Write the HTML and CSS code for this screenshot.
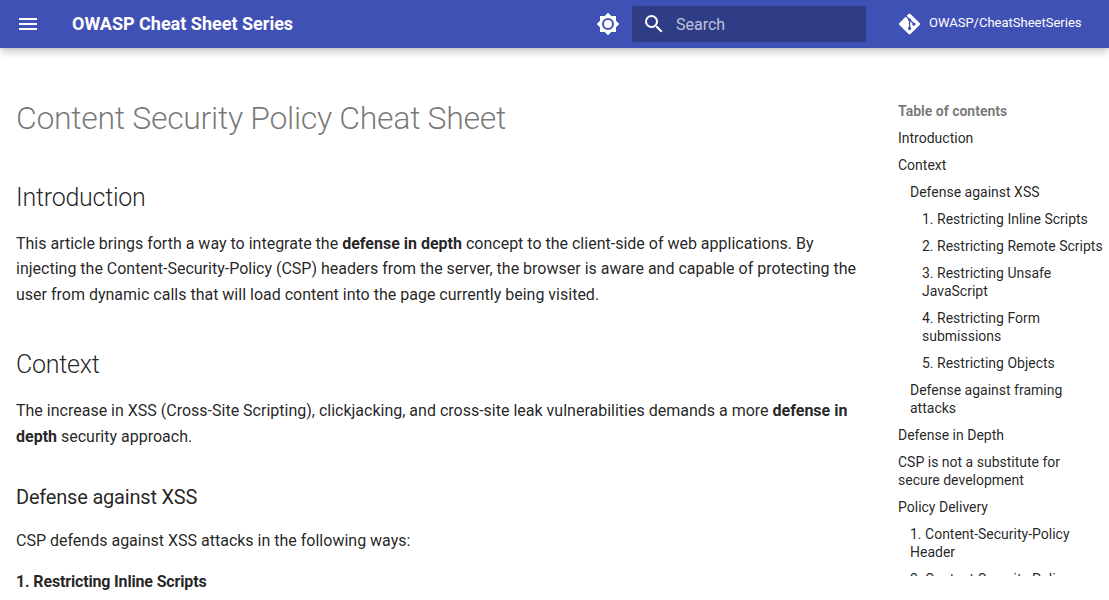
FILE: index.html
```html
<!DOCTYPE html>
<html lang="en">
<head>
<meta charset="utf-8">
<title>Content Security Policy Cheat Sheet</title>
<link rel="stylesheet" href="styles.css">
</head>
<body>
<header class="header">
  <svg class="icon menu" viewBox="0 0 24 24"><path d="M3 6h18v2H3V6m0 5h18v2H3v-2m0 5h18v2H3v-2Z"/></svg>
  <div class="title">OWASP Cheat Sheet Series</div>
  <svg class="icon theme" viewBox="0 0 24 24"><path d="M12 8a4 4 0 0 0-4 4 4 4 0 0 0 4 4 4 4 0 0 0 4-4 4 4 0 0 0-4-4m0 10a6 6 0 0 1-6-6 6 6 0 0 1 6-6 6 6 0 0 1 6 6 6 6 0 0 1-6 6m8-9.31V4h-4.69L12 .69 8.69 4H4v4.69L.69 12 4 15.31V20h4.69L12 23.31 15.31 20H20v-4.69L23.31 12 20 8.69Z"/></svg>
  <div class="search">
    <svg class="icon" viewBox="0 0 24 24"><path d="M9.5 3A6.5 6.5 0 0 1 16 9.5c0 1.61-.59 3.09-1.56 4.23l.27.27h.79l5 5-1.5 1.5-5-5v-.79l-.27-.27A6.516 6.516 0 0 1 9.5 16 6.5 6.5 0 0 1 3 9.5 6.5 6.5 0 0 1 9.5 3m0 2C7 5 5 7 5 9.5S7 14 9.5 14 14 12 14 9.5 12 5 9.5 5Z"/></svg>
    <span class="placeholder">Search</span>
  </div>
  <a class="source">
    <svg class="git" viewBox="0 0 448 512"><path d="M439.55 236.05 244 40.45a28.87 28.87 0 0 0-40.81 0l-40.66 40.63 51.52 51.52c27.06-9.14 52.68 16.77 43.39 43.68l49.66 49.66c34.23-11.8 61.18 31 35.47 56.69-26.49 26.49-70.21-2.87-56-37.34L240.22 199v121.85c25.3 12.54 22.26 41.85 9.08 55a34.34 34.34 0 0 1-48.55 0c-17.57-17.6-11.07-46.91 11.25-56v-123c-20.8-8.51-24.6-30.74-18.64-45L142.57 101 8.45 235.14a28.86 28.86 0 0 0 0 40.81l195.61 195.6a28.86 28.86 0 0 0 40.8 0l194.69-194.69a28.86 28.86 0 0 0 0-40.81z"/></svg>
    <span class="repo">OWASP/CheatSheetSeries</span>
  </a>
</header>
<div class="layout">
  <main class="content">
    <h1>Content Security Policy Cheat Sheet</h1>
    <h2>Introduction</h2>
    <p>This article brings forth a way to integrate the <strong>defense in depth</strong> concept to the client-side of web applications. By<br>injecting the Content-Security-Policy (CSP) headers from the server, the browser is aware and capable of protecting the<br>user from dynamic calls that will load content into the page currently being visited.</p>
    <h2>Context</h2>
    <p>The increase in XSS (Cross-Site Scripting), clickjacking, and cross-site leak vulnerabilities demands a more <strong>defense in<br>depth</strong> security approach.</p>
    <h3>Defense against XSS</h3>
    <p>CSP defends against XSS attacks in the following ways:</p>
    <h4>1. Restricting Inline Scripts</h4>
  </main>
  <nav class="toc">
    <div class="toc-title">Table of contents</div>
    <ul>
      <li>Introduction</li>
      <li>Context</li>
      <li class="l2">Defense against XSS</li>
      <li class="l3">1. Restricting Inline Scripts</li>
      <li class="l3">2. Restricting Remote Scripts</li>
      <li class="l3">3. Restricting Unsafe<br>JavaScript</li>
      <li class="l3">4. Restricting Form<br>submissions</li>
      <li class="l3">5. Restricting Objects</li>
      <li class="l2">Defense against framing<br>attacks</li>
      <li>Defense in Depth</li>
      <li>CSP is not a substitute for<br>secure development</li>
      <li>Policy Delivery</li>
      <li class="l2">1. Content-Security-Policy<br>Header</li>
      <li class="l2">2. Content-Security-Policy-</li>
    </ul>
  </nav>
</div>
</body>
</html>
```
FILE: styles.css
```css
* { box-sizing: border-box; }
html, body { margin: 0; height: 600px; overflow: hidden; }
body { font-family: Roboto, sans-serif; color: rgba(0,0,0,.87); background: #fff; -webkit-font-smoothing: antialiased; }
.header { position: relative; height: 48px; display: flex; align-items: center; background: #4051b5; color: #fff; box-shadow: 0 0 4px rgba(0,0,0,.1), 0 4px 8px rgba(0,0,0,.2); }
.icon { width: 24px; height: 24px; fill: currentColor; flex: none; }
.menu { margin-left: 16px; }
.title { margin-left: 32px; width: 524px; font-size: 18px; font-weight: 700; line-height: 48px; white-space: nowrap; }
.search { margin-left: 12px; width: 234px; height: 36px; padding-left: 10px; display: flex; align-items: center; gap: 10px; background: rgba(0,0,0,.26); border-radius: 2px; }
.placeholder { font-size: 16px; color: rgba(255,255,255,.7); }
.source { display: flex; align-items: center; margin-left: 33px; font-size: 13px; white-space: nowrap; }
.git { width: 21px; height: 24px; margin-right: 9px; fill: currentColor; }
.repo { padding-bottom: 3px; }
.layout { display: flex; height: 552px; }
.content { width: 898px; flex: none; padding-left: 16px; white-space: nowrap; }
h1, h2, h3, h4, p, ul { margin: 0; }
h1, h2, h3, h4 { letter-spacing: -.01em; }
h1 { margin-top: 49px; font-size: 32px; line-height: 42px; font-weight: 300; color: rgba(0,0,0,.54); }
h2 { font-size: 25px; line-height: 35px; font-weight: 300; margin-top: 41px; }
p + h2 { margin-top: 40px; }
h2 + p { margin-top: 15.6px; }
p { font-size: 16px; line-height: 25.6px; }
h3 { margin-top: 33px; font-size: 20px; line-height: 30px; font-weight: 400; }
h3 + p { margin-top: 16px; }
h4 { margin-top: 16px; font-size: 16px; line-height: 24px; font-weight: 700; }
.toc { width: 211px; height: 528px; overflow: hidden; padding-top: 54px; font-size: 14px; line-height: 18px; white-space: nowrap; }
.toc-title { font-weight: 700; color: rgba(0,0,0,.54); }
ul { padding: 0; list-style: none; }
li { margin-top: 9px; }
.l2 { padding-left: 12px; }
.l3 { padding-left: 24px; }
```
